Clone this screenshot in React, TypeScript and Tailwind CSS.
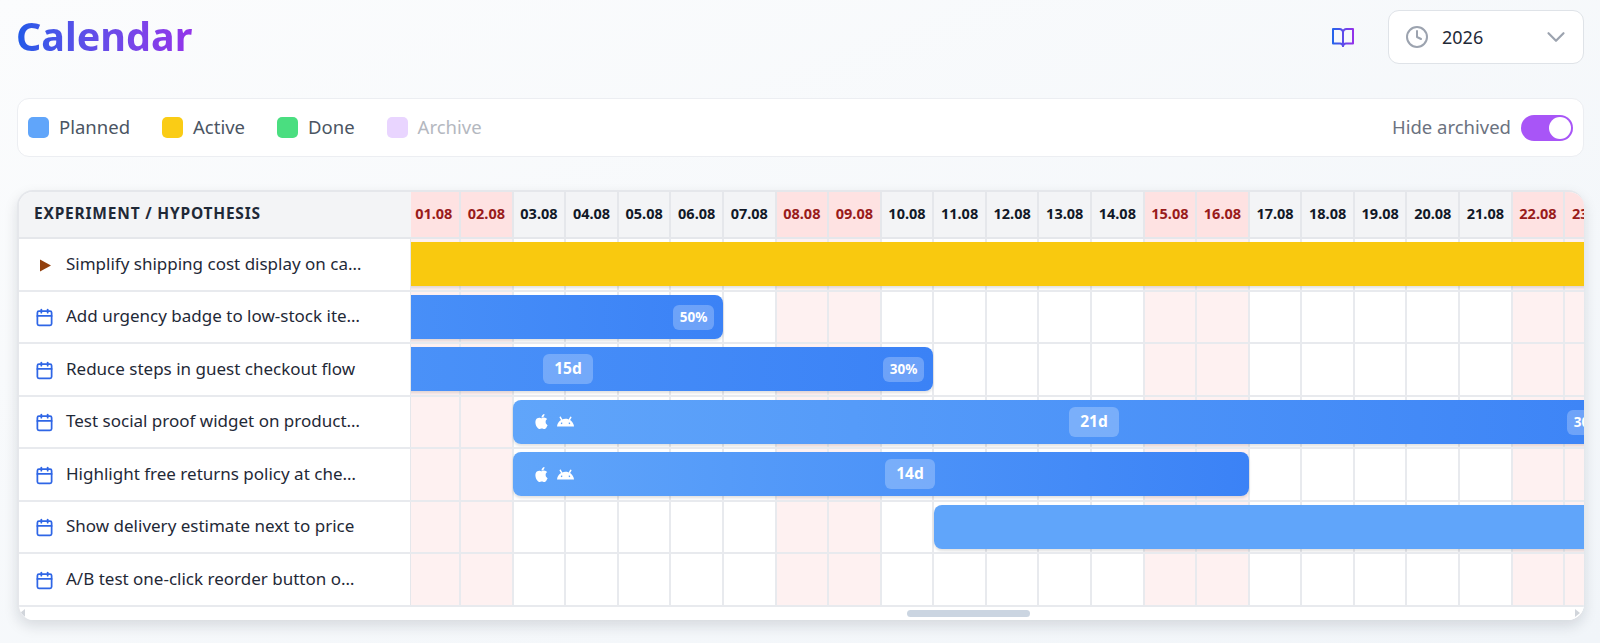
import React from "react";
import { Calendar, ChevronDown, Clock } from "lucide-react";
import { SiAndroid, SiApple } from "react-icons/si";

const font = { fontFamily: '"Noto Sans", sans-serif' };
const days = Array.from({ length: 23 }, (_, i) => {
  const d = i + 1;
  return { label: `${String(d).padStart(2, "0")}.08`, weekend: i % 7 === 0 || i % 7 === 1 };
});

const Platforms = () => (
  <div className="flex items-center gap-[8px] text-white">
    <SiApple size={15} />
    <SiAndroid size={17} />
  </div>
);

const Badge = ({ children, className }: { children: React.ReactNode; className: string }) => (
  <span className={`absolute flex items-center justify-center rounded-[6px] bg-white/25 font-bold text-white ${className}`}>
    {children}
  </span>
);

const rowsData: { name: string; first?: boolean; bar: React.ReactNode }[] = [
  {
    name: "Simplify shipping cost display on ca…",
    first: true,
    bar: <div className="absolute top-[3px] left-[-100px] h-[44px] w-[3000px] rounded-[8px] bg-[#f9c90f] shadow-[0_2px_3px_rgba(0,0,0,0.12)]" />,
  },
  {
    name: "Add urgency badge to low-stock ite…",
    bar: (
      <div className="absolute top-[3px] left-[-200px] h-[44px] w-[512px] rounded-[8px] bg-linear-to-r from-[#5097f9] to-[#3b82f6] shadow-[0_2px_3px_rgba(0,0,0,0.12)]">
        <Badge className="top-[10px] right-[9px] h-[25px] w-[41px] text-[13.5px]">50%</Badge>
      </div>
    ),
  },
  {
    name: "Reduce steps in guest checkout flow",
    bar: (
      <div className="absolute top-[3px] left-[-208px] h-[44px] w-[730px] rounded-[8px] bg-linear-to-r from-[#5097f9] to-[#3b82f6] shadow-[0_2px_3px_rgba(0,0,0,0.12)]">
        <Badge className="top-[7px] left-[340px] h-[30px] w-[50px] text-[15.5px]">15d</Badge>
        <Badge className="top-[10px] right-[9px] h-[25px] w-[41px] text-[13.5px]">30%</Badge>
      </div>
    ),
  },
  {
    name: "Test social proof widget on product…",
    bar: (
      <div className="absolute top-[3px] left-[102px] flex h-[44px] w-[1162px] items-center rounded-[8px] bg-linear-to-r from-[#60a5fa] to-[#3b82f6] pl-[21px] shadow-[0_2px_3px_rgba(0,0,0,0.12)]">
        <Platforms />
        <Badge className="top-[7px] left-[556px] h-[30px] w-[50px] text-[15.5px]">21d</Badge>
        <Badge className="top-[10px] left-[1054px] h-[25px] w-[41px] text-[13.5px]">30%</Badge>
      </div>
    ),
  },
  {
    name: "Highlight free returns policy at che…",
    bar: (
      <div className="absolute top-[3px] left-[102px] flex h-[44px] w-[736px] items-center rounded-[8px] bg-linear-to-r from-[#60a5fa] to-[#3b82f6] pl-[21px] shadow-[0_2px_3px_rgba(0,0,0,0.12)]">
        <Platforms />
        <Badge className="top-[7px] left-[372px] h-[30px] w-[50px] text-[15.5px]">14d</Badge>
      </div>
    ),
  },
  {
    name: "Show delivery estimate next to price",
    bar: <div className="absolute top-[3px] left-[523px] h-[44px] w-[3000px] rounded-[8px] bg-[#60a5fa] shadow-[0_2px_3px_rgba(0,0,0,0.12)]" />,
  },
  { name: "A/B test one-click reorder button o…", bar: null },
];

const legend = [
  { label: "Planned", swatch: "bg-[#60a5fa]", text: "text-[#4b5563]" },
  { label: "Active", swatch: "bg-[#facc15]", text: "text-[#4b5563]" },
  { label: "Done", swatch: "bg-[#4ade80]", text: "text-[#4b5563]" },
  { label: "Archive", swatch: "bg-[#e9d5ff]", text: "text-[#b4b8c0]" },
];

export default function App() {
  return (
    <div style={font} className="h-[643px] overflow-hidden bg-linear-to-br from-[#fbfcfd] to-[#f1f5f9] pt-[10px] pr-[16px] pl-[17px]">
      <header className="flex h-[54px] items-center justify-between">
        <h1 className="mt-[2px] -ml-[1px] bg-linear-to-r from-[#1d5ae8] to-[#9333ea] bg-clip-text pb-[4px] text-[39.5px] leading-[50px] font-bold text-transparent">
          Calendar
        </h1>
        <div className="flex items-center gap-[33px]">
          <svg width="24" height="24" viewBox="0 0 24 24" fill="none" strokeWidth="2" strokeLinecap="round" strokeLinejoin="round">
            <defs>
              <linearGradient id="bookGradient" gradientUnits="userSpaceOnUse" x1="2" y1="12" x2="22" y2="12">
                <stop offset="0" stopColor="#2563eb" />
                <stop offset="1" stopColor="#9333ea" />
              </linearGradient>
            </defs>
            <path stroke="url(#bookGradient)" d="M2 4h6.5a3.5 3.5 0 0 1 3.5 3.5V21a3 3 0 0 0-3-2.5H2z" />
            <path stroke="url(#bookGradient)" d="M22 4h-6.5a3.5 3.5 0 0 0-3.5 3.5V21a3 3 0 0 1 3-2.5h7z" />
          </svg>
          <div className="flex h-[54px] w-[196px] items-center rounded-[11px] border border-[#dfe3e8] bg-white pr-[12px] pl-[16px]">
            <Clock size={24} className="text-[#9ca3af]" strokeWidth={2} />
            <span className="ml-[13px] text-[18px] text-[#1f2937]">2026</span>
            <ChevronDown size={30} className="ml-auto text-[#9ca3af]" strokeWidth={1.75} />
          </div>
        </div>
      </header>

      <section className="mt-[34px] flex h-[59px] items-center justify-between rounded-[12px] border border-[#eceef2] bg-white pr-[10px] pl-[10px]">
        <div className="flex items-center gap-[32px]">
          {legend.map((l) => (
            <div key={l.label} className="flex items-center gap-[10px]">
              <span className={`h-[21px] w-[21px] rounded-[5px] ${l.swatch}`} />
              <span className={`pb-[2px] text-[18.5px] ${l.text}`}>{l.label}</span>
            </div>
          ))}
        </div>
        <div className="flex items-center gap-[10px]">
          <span className="pb-[2px] text-[18.5px] text-[#6b7280]">Hide archived</span>
          <span className="flex h-[26px] w-[52px] items-center justify-end rounded-full bg-[#a855f7] pr-[2px]">
            <span className="h-[22px] w-[22px] rounded-full bg-white" />
          </span>
        </div>
      </section>

      <section className="mt-[33px] overflow-hidden rounded-[16px] border-t-2 border-l-2 border-[#e5e7eb] bg-white shadow-[0_6px_14px_rgba(15,23,42,0.13)]">
        <div className="flex h-[47px] border-b-2 border-[#e5e7eb] bg-[#f3f4f6]">
          <div className="flex w-[392px] shrink-0 items-center pb-[2px] pl-[15px] text-[15.5px] font-bold tracking-[0.8px] text-[#1f2937]">
            EXPERIMENT / HYPOTHESIS
          </div>
          <div className="flex-1 overflow-hidden">
            <div className="-ml-[2.5px] flex h-full w-max">
              {days.map((d) => (
                <div
                  key={d.label}
                  className={`flex h-full w-[52.58px] shrink-0 items-center justify-center border-r-2 border-[#e5e7eb] pb-[2px] text-[14.5px] font-bold ${d.weekend ? "bg-[#fee2e2] text-[#991b1b]" : "text-[#111827]"}`}
                >
                  {d.label}
                </div>
              ))}
            </div>
          </div>
        </div>

        {rowsData.map((row) => (
          <div key={row.name} className="flex h-[52.5px] border-b-2 border-[#e8eaee]">
            <div className="flex w-[392px] shrink-0 items-center border-r border-[#e5e7eb] bg-white pl-[16px] text-[17px] text-[#1f2937]">
              {row.first ? (
                <svg width="19" height="19" viewBox="0 0 19 19" className="mt-[2px] shrink-0">
                  <path d="M5 3.5 L16 9.5 L5 15.5 Z" fill="#92400e" />
                </svg>
              ) : (
                <Calendar size={19} className="mt-[2px] shrink-0 text-[#2f66e6]" strokeWidth={2.2} />
              )}
              <span className="ml-[12px] pb-[2px] whitespace-nowrap">{row.name}</span>
            </div>
            <div className="relative flex-1 overflow-hidden">
              <div className="-ml-[2.5px] flex h-full w-max">
                {days.map((d) => (
                  <div
                    key={d.label}
                    className={`h-full w-[52.58px] shrink-0 border-r-2 border-[#e8eaee] ${d.weekend ? "bg-[#fef1f1]" : "bg-white"}`}
                  />
                ))}
              </div>
              {row.bar}
            </div>
          </div>
        ))}

        <div className="flex h-[13.5px] items-center bg-white pr-[4px] pl-[1px]">
          <svg width="5" height="8" viewBox="0 0 5 8"><path d="M5 0V8L0 4Z" fill="#d1d5db" /></svg>
          <div className="ml-[882px] h-[7px] w-[123px] rounded-full bg-[#cbd5e1]" />
          <svg width="5" height="8" viewBox="0 0 5 8" className="ml-auto"><path d="M0 0V8L5 4Z" fill="#d1d5db" /></svg>
        </div>
      </section>
    </div>
  );
}
